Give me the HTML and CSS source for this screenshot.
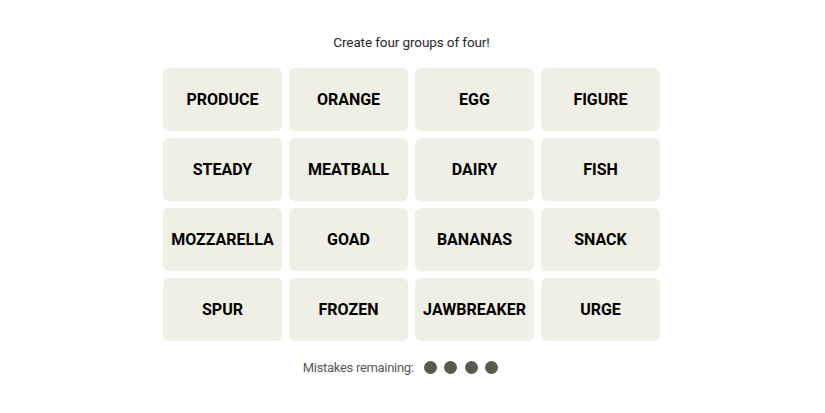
FILE: index.html
```html
<!DOCTYPE html>
<html lang="en">
<head>
<meta charset="utf-8">
<title>Connections</title>
<link rel="stylesheet" href="styles.css">
</head>
<body>
<main class="game">
  <p class="prompt">Create four groups of four!</p>
  <div class="board">
    <button class="tile">PRODUCE</button>
    <button class="tile">ORANGE</button>
    <button class="tile">EGG</button>
    <button class="tile">FIGURE</button>
    <button class="tile">STEADY</button>
    <button class="tile">MEATBALL</button>
    <button class="tile">DAIRY</button>
    <button class="tile">FISH</button>
    <button class="tile">MOZZARELLA</button>
    <button class="tile">GOAD</button>
    <button class="tile">BANANAS</button>
    <button class="tile">SNACK</button>
    <button class="tile">SPUR</button>
    <button class="tile">FROZEN</button>
    <button class="tile">JAWBREAKER</button>
    <button class="tile">URGE</button>
  </div>
  <div class="mistakes">
    <span class="mistakes-label">Mistakes remaining:</span>
    <span class="dots">
      <span class="dot"></span><span class="dot"></span><span class="dot"></span><span class="dot"></span>
    </span>
  </div>
</main>
</body>
</html>
```
FILE: styles.css
```css
html, body {
  margin: 0;
  padding: 0;
  background: #ffffff;
}
body {
  font-family: Roboto, "Liberation Sans", sans-serif;
  color: #121212;
}
.game {
  display: flex;
  flex-direction: column;
  align-items: center;
  padding-top: 33px;
  padding-right: 2px;
}
.prompt {
  margin: 0;
  font-size: 13.5px;
  line-height: 18px;
  color: #2a2a2a;
  letter-spacing: -0.1px;
}
.board {
  margin-top: 17px;
  display: grid;
  grid-template-columns: repeat(4, 119px);
  grid-auto-rows: 63px;
  gap: 7px;
}
.tile {
  border: none;
  border-radius: 6px;
  background: #efefe6;
  font-family: Roboto, "Liberation Sans", sans-serif;
  font-weight: 700;
  font-size: 16px;
  color: #000000;
  padding: 0;
  display: flex;
  align-items: center;
  justify-content: center;
}
.mistakes {
  margin-top: 19px;
  display: flex;
  align-items: center;
  gap: 10px;
}
.mistakes-label {
  font-size: 13px;
  letter-spacing: -0.3px;
  color: #5a5a5a;
  font-weight: 400;
}
.dots {
  display: flex;
  gap: 7.5px;
  padding-right: 22px;
}
.dot {
  width: 13px;
  height: 13px;
  border-radius: 50%;
  background: #5a594e;
}
```
